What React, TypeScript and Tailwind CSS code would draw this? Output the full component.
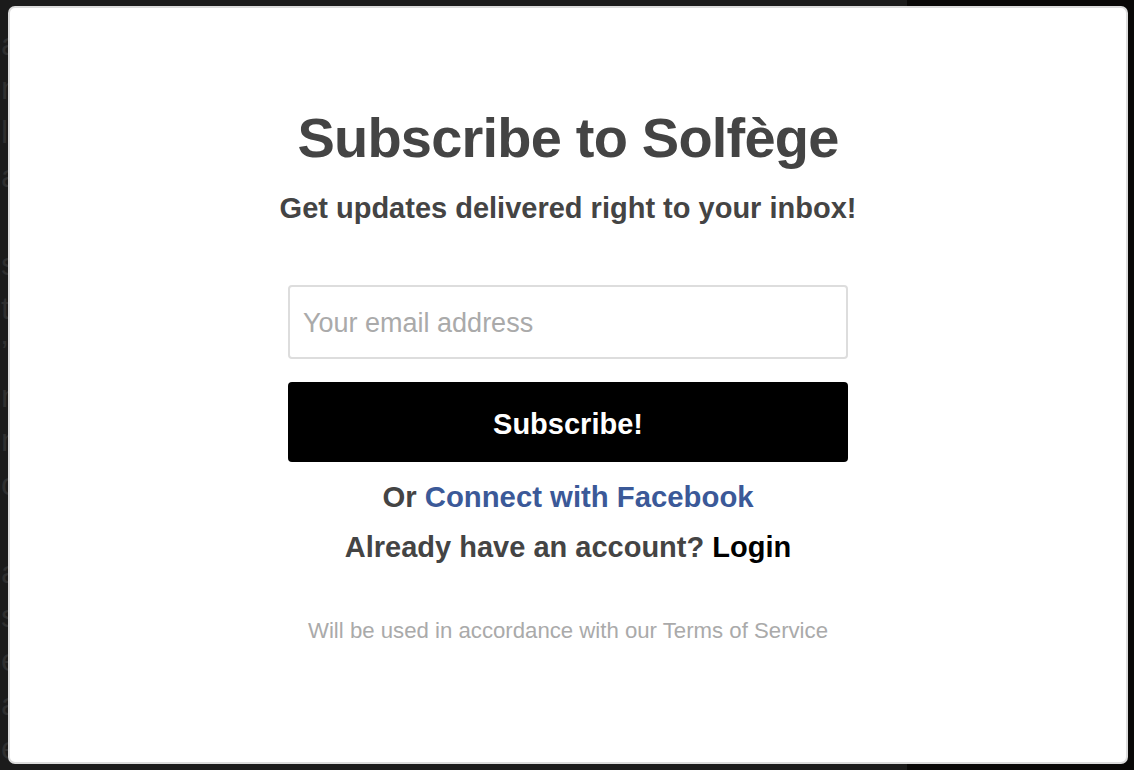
import React from 'react';

const behindLines = ['a', 'n', 'ls', 'a', '', 's', 'th', '’.', 'n', 'n', 'o', '', 'a', 's', 'e', 'a', 'e'];

export default function App() {
  return (
    <div className="relative h-[770px] w-full overflow-hidden font-['Liberation_Sans',Arial,sans-serif]">
      {/* Page behind the overlay */}
      <div className="flex h-full">
        <div className="flex-1 bg-[#1b1b1b] pt-[22px] pl-[1px]">
          {behindLines.map((line, i) => (
            <div key={i} className="h-[44px] text-[32px] leading-[44px] text-[#2f2f2f]">
              {line}
            </div>
          ))}
        </div>
        <div className="w-[227px] bg-[#090807]" />
      </div>

      {/* Modal */}
      <div className="absolute top-[6px] left-[8px] right-[6px] bottom-[6px] rounded-[7px] border-2 border-[#dcdcdc] bg-white">
        <div className="flex flex-col items-center pt-[98px]">
          <h1 className="h-[64px] text-[56px] font-bold leading-[64px] tracking-[-0.8px] text-[#444444]">
            Subscribe to Solfège
          </h1>
          <p className="mt-[20px] h-[36px] text-[29px] font-bold leading-[36px] text-[#444444]">
            Get updates delivered right to your inbox!
          </p>

          <input
            type="email"
            placeholder="Your email address"
            className="mt-[59px] h-[74px] w-[560px] rounded-[4px] border-2 border-[#dddddd] px-[13px] pt-[2px] text-[27px] text-[#444444] outline-none placeholder:text-[#aaaaaa]"
          />

          <button className="mt-[23px] h-[80px] w-[560px] rounded-[4px] bg-black pt-[5px] text-[29px] font-bold text-white">
            Subscribe!
          </button>

          <p className="mt-[17px] h-[36px] text-[29.3px] font-bold leading-[36px] text-[#444444]">
            Or <a className="text-[#3b5998]">Connect with Facebook</a>
          </p>
          <p className="mt-[14px] h-[36px] text-[29px] font-bold leading-[36px] text-[#444444]">
            Already have an account? <a className="text-black">Login</a>
          </p>

          <p className="mt-[52px] h-[28px] text-[22.2px] leading-[28px] text-[#aaaaaa]">
            Will be used in accordance with our Terms of Service
          </p>
        </div>
      </div>
    </div>
  );
}
